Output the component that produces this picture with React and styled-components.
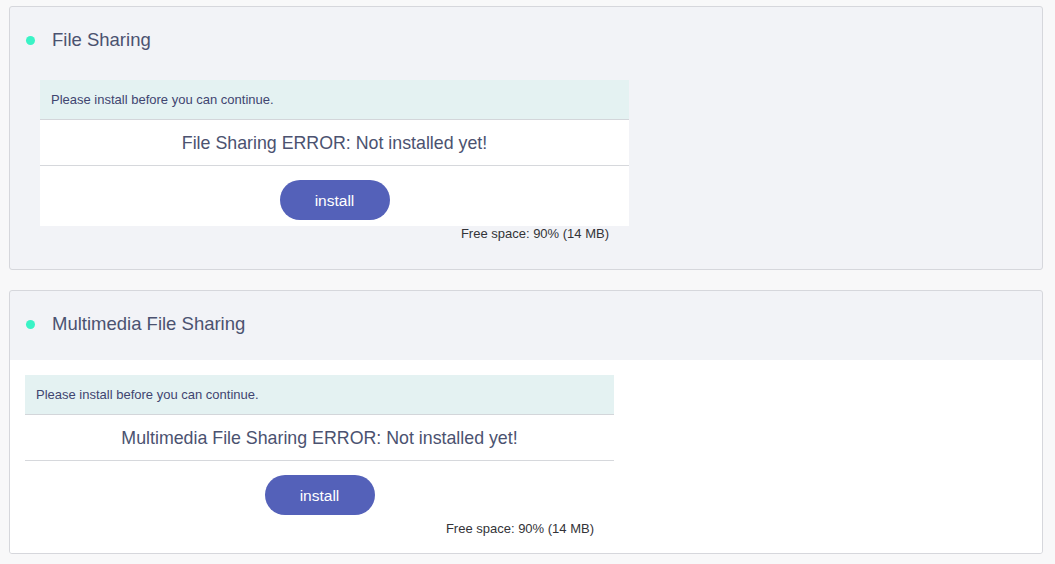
import React from 'react'
import styled, { createGlobalStyle } from 'styled-components'

const GlobalStyle = createGlobalStyle`
  html, body {
    margin: 0;
    padding: 0;
    background: #f8f8f9;
    font-family: "Liberation Sans", Arial, sans-serif;
  }
`

const apps = [
  { id: 'fs', name: 'File Sharing', variant: 'compact' },
  { id: 'mfs', name: 'Multimedia File Sharing', variant: 'open' }
]

export default function App() {
  return (
    <>
      <GlobalStyle />
      <Page>
        {apps.map(app => (
          <Panel key={app.id}>
            <Header>
              <Dot />
              <Title>{app.name}</Title>
            </Header>
            <Body variant={app.variant}>
              <Notice>
                <NoticeHead>Please install before you can continue.</NoticeHead>
                <ErrorRow>{app.name} ERROR: Not installed yet!</ErrorRow>
                <ActionRow>
                  <InstallButton>install</InstallButton>
                </ActionRow>
              </Notice>
              <FreeSpace>Free space: 90% (14 MB)</FreeSpace>
            </Body>
          </Panel>
        ))}
      </Page>
    </>
  )
}

const Page = styled.div`
  display: flex;
  flex-direction: column;
  gap: 20px;
  padding: 6px 12px 10px 9px;
`

const Panel = styled.section`
  background: #f2f3f7;
  border: 1px solid #d6d7dc;
  border-radius: 3px;
  overflow: hidden;
`

const Header = styled.div`
  display: flex;
  align-items: center;
  height: 69px;
  padding: 0 0 4px 16px;
  box-sizing: border-box;
`

const Dot = styled.span`
  width: 9px;
  height: 9px;
  border-radius: 50%;
  background: #3af3c6;
  margin-right: 17px;
  margin-top: 1px;
`

const Title = styled.h2`
  margin: 0;
  font-size: 18.5px;
  font-weight: normal;
  color: #4b5270;
`

const Body = styled.div`
  background: ${({ variant }) => (variant === 'open' ? '#ffffff' : 'transparent')};
  padding: ${({ variant }) =>
    variant === 'open' ? '15px 0 16px 15px' : '4px 0 27px 30px'};
`

const Notice = styled.div`
  width: 589px;
  background: #ffffff;
`

const NoticeHead = styled.div`
  height: 39px;
  display: flex;
  align-items: center;
  padding-left: 11px;
  background: #e4f2f2;
  border-bottom: 1px solid #d3d6da;
  font-size: 13px;
  color: #3f4570;
`

const ErrorRow = styled.div`
  height: 46px;
  display: flex;
  align-items: center;
  justify-content: center;
  border-bottom: 1px solid #d6d8dc;
  font-size: 17.8px;
  color: #4b5270;
  padding-top: 2px;
  box-sizing: border-box;
`

const ActionRow = styled.div`
  display: flex;
  justify-content: center;
  padding: 14px 0 6px;
`

const InstallButton = styled.button`
  width: 110px;
  height: 40px;
  border: none;
  border-radius: 20px;
  background: #5461b9;
  color: #ffffff;
  font-family: inherit;
  font-size: 15.5px;
  padding-top: 2px;
  cursor: pointer;
`

const FreeSpace = styled.div`
  width: 569px;
  text-align: right;
  font-size: 13px;
  line-height: 16px;
  color: #333338;
`
